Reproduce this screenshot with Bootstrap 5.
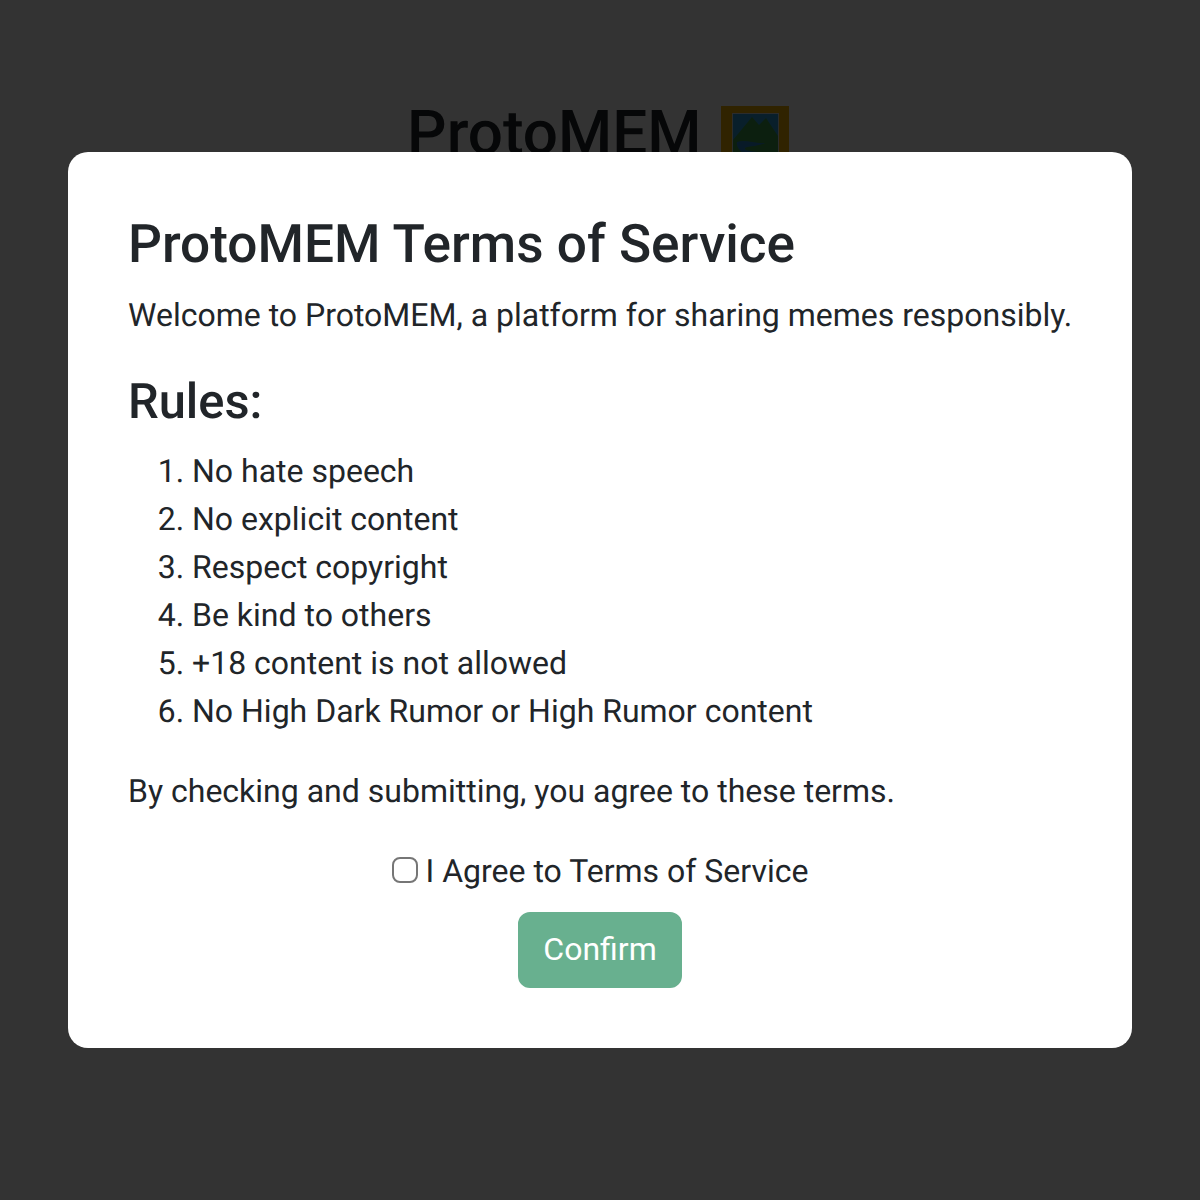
<!DOCTYPE html>
<html lang="en">
<head>
<meta charset="utf-8">
<title>ProtoMEM</title>
<link href="https://cdn.jsdelivr.net/npm/bootstrap@5.3.0/dist/css/bootstrap.min.css" rel="stylesheet">
<style>
html { font-size: 32px; }
body { font-family: Roboto, "Liberation Sans", sans-serif; color: #212529; background: #fff; text-rendering: geometricPrecision; }
.site-title { font-size: 62px; font-weight: 500; line-height: 1.2; padding-top: 97px; }
.site-title svg { width: 68px; height: 68px; margin: 0 4px; vertical-align: -20px; }
.tos-backdrop { background: rgba(0, 0, 0, .8); }
.tos-panel { width: 1064px; padding: 61px 56px 60px 60px; border-radius: 20px; }
.tos-panel h2 { font-size: 53.2px; margin-bottom: 14px; }
.tos-panel h3 { font-size: 48.8px; margin-bottom: 15px; }
.tos-intro { margin-bottom: 34px; }
.tos-check { width: 26px; height: 26px; margin: 0; border: 2px solid #767676; border-radius: 5px; vertical-align: -1px; float: none; }
.tos-center { margin-right: 4px; }
.tos-btn { --bs-btn-border-width: 2px; --bs-btn-border-radius: 12px; display: block; margin-top: 17px; padding: 11px 23px 13px; }
</style>
</head>
<body>
<h1 class="site-title text-center m-0">ProtoMEM
<svg viewBox="0 0 68 68" aria-hidden="true">
<rect x="0" y="0" width="68" height="68" fill="#f0b000"/>
<rect x="11" y="7" width="47" height="56" fill="#d8dde0"/>
<rect x="12" y="8" width="45" height="54" fill="#2f9bd6"/>
<path d="M12 34 L31 11 L38 19 L45 12 L57 30 V62 H12 Z" fill="#3f9a4c"/>
<path d="M16 36 C24 33 34 38 44 37 C36 41 22 40 24 43 C26 46 38 45 44 48 H24 C18 45 15 40 16 36 Z" fill="#2a84c9"/>
</svg>
</h1>
<div class="tos-backdrop position-fixed top-0 start-0 w-100 h-100 d-flex align-items-center justify-content-center">
  <div class="tos-panel bg-white">
    <h2>ProtoMEM Terms of Service</h2>
    <p class="tos-intro">Welcome to ProtoMEM, a platform for sharing memes responsibly.</p>
    <h3>Rules:</h3>
    <ol>
      <li>No hate speech</li>
      <li>No explicit content</li>
      <li>Respect copyright</li>
      <li>Be kind to others</li>
      <li>+18 content is not allowed</li>
      <li>No High Dark Rumor or High Rumor content</li>
    </ol>
    <p>By checking and submitting, you agree to these terms.</p>
    <div class="text-center tos-center">
      <label class="d-block"><input class="form-check-input tos-check" type="checkbox"> I Agree to Terms of Service</label>
      <button type="button" class="btn btn-success tos-btn mx-auto" disabled>Confirm</button>
    </div>
  </div>
</div>
<script src="https://cdn.jsdelivr.net/npm/bootstrap@5.3.0/dist/js/bootstrap.bundle.min.js"></script>
</body>
</html>
